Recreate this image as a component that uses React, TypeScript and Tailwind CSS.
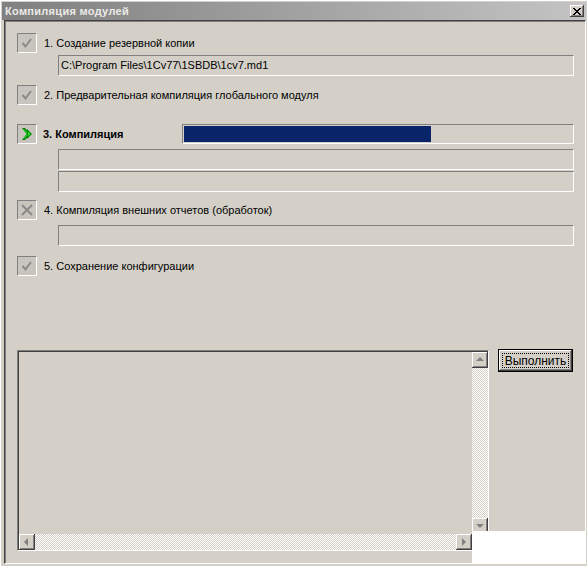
import React from "react";

const raised =
  "bg-[#d4d0c8] shadow-[inset_-1px_-1px_#404040,inset_1px_1px_#ffffff,inset_-2px_-2px_#808080]";
const checker =
  "bg-[repeating-conic-gradient(#ffffff_0%_25%,#d4d0c8_0%_50%)] bg-[length:2px_2px]";

function Field({ text, className = "" }: { text?: string; className?: string }) {
  return (
    <div
      className={`ml-[41px] w-[516px] h-[21px] border-t border-l border-[#808080] border-r-white border-b-white border-r border-b flex items-center pl-[2px] text-black ${className}`}
    >
      {text}
    </div>
  );
}

function Box({ children }: { children: React.ReactNode }) {
  return (
    <div className="w-[20px] h-[20px] shrink-0 bg-[#c8c5be] border-t border-l border-[#808080] border-r border-b border-r-white border-b-white flex items-center justify-center">
      {children}
    </div>
  );
}

function Check() {
  return (
    <Box>
      <svg width="18" height="18" viewBox="0 0 18 18">
        <path d="M4.5 9 L7.5 12.5 L13 5" fill="none" stroke="#8a8a8a" strokeWidth="2" />
      </svg>
    </Box>
  );
}

function Cross() {
  return (
    <Box>
      <svg width="18" height="18" viewBox="0 0 18 18">
        <path d="M4 4 L14 14 M14 4 L4 14" fill="none" stroke="#8a8a8a" strokeWidth="2" />
      </svg>
    </Box>
  );
}

function Play() {
  return (
    <Box>
      <svg width="18" height="18" viewBox="0 0 18 18">
        <polygon points="4,3 7,3 12,9 7,15 4,15 9,9" fill="#007a00" />
        <polygon points="5,4.5 7,4.5 10.5,9 7,13.5 5,13.5 8.5,9" fill="#22c022" />
        <polygon points="9,4 14,9 9,14" fill="#008a00" />
        <polygon points="10,6.5 12.5,9 10,11.5" fill="#3ad63a" />
      </svg>
    </Box>
  );
}

function Arrow({ dir }: { dir: "up" | "down" | "left" | "right" }) {
  const pts = {
    up: "4,9 8,5 12,9",
    down: "4,6 8,10 12,6",
    left: "9,4 5,8 9,12",
    right: "6,4 10,8 6,12",
  }[dir];
  return (
    <div className={`w-[16px] h-[16px] shrink-0 ${raised} flex items-center justify-center`}>
      <svg width="16" height="16" viewBox="0 0 16 16">
        <polygon points={pts} fill="#808080" />
      </svg>
    </div>
  );
}

export default function App() {
  return (
    <div
      className="relative w-[587px] h-[566px] bg-[#d4d0c8] text-[11px] leading-none text-black overflow-hidden border-l border-t border-white"
      style={{ fontFamily: '"Liberation Sans", Arial, sans-serif' }}
    >
      {/* title bar */}
      <div className="mt-[1px] ml-[1px] mr-[1px] h-[18px] bg-gradient-to-r from-[#808080] to-[#c4c4c4] flex items-center justify-between pl-[3px] pr-[2px]">
        <span className="font-bold text-[#ecebe7] text-[11px] tracking-[0.3px]">Компиляция модулей</span>
        <div className={`w-[14px] h-[12px] ${raised} flex items-center justify-center`}>
          <svg width="8" height="7" viewBox="0 0 8 7">
            <path d="M0 0h2v1h-2zM6 0h2v1h-2zM1 1h2v1h-2zM5 1h2v1h-2zM2 2h4v1h-4zM3 3h2v1h-2zM2 4h4v1h-4zM1 5h2v1h-2zM5 5h2v1h-2zM0 6h2v1h-2zM6 6h2v1h-2z" fill="#000" />
          </svg>
        </div>
      </div>

      {/* client frame */}
      <div className="ml-[3px] w-[582px] h-[544px] border-t border-l border-[#404040] border-r border-b border-r-white border-b-white shadow-[inset_1px_1px_#808080] pl-[12px] pt-[12px]">
        <div className="flex items-center h-[20px]">
          <Check />
          <span className="ml-[7px]">1. Создание резервной копии</span>
        </div>
        <Field className="mt-[2px]" text="C:\Program Files\1Cv77\1SBDB\1cv7.md1" />

        <div className="flex items-center h-[20px] mt-[9px]">
          <Check />
          <span className="ml-[7px]">2. Предварительная компиляция глобального модуля</span>
        </div>

        <div className="flex items-center h-[20px] mt-[19px] w-[557px]">
          <Play />
          <span className="ml-[6px] font-bold">3. Компиляция</span>
          <div className="ml-auto w-[392px] h-[20px] border-t border-l border-[#808080] border-r border-b border-r-white border-b-white p-[1px]">
            <div className="h-full w-[247px] bg-[#0a246a]" />
          </div>
        </div>
        <Field className="mt-[5px]" />
        <Field className="mt-[1px]" />

        <div className="flex items-center h-[20px] mt-[8px]">
          <Cross />
          <span className="ml-[7px]">4. Компиляция внешних отчетов (обработок)</span>
        </div>
        <Field className="mt-[5px]" />

        <div className="flex items-center h-[20px] mt-[10px]">
          <Check />
          <span className="ml-[7px]">5. Сохранение конфигурации</span>
        </div>

        {/* log + button */}
        <div className="flex items-start mt-[74px]">
          <div className="w-[472px] h-[201px] border-t border-l border-[#808080] border-r border-b border-r-white border-b-white shadow-[inset_1px_1px_#404040] pt-[1px] pl-[1px] flex flex-col">
            <div className="flex flex-1">
              <div className="flex-1" />
              <div className="w-[16px] flex flex-col">
                <Arrow dir="up" />
                <div className={`flex-1 ${checker}`} />
                <Arrow dir="down" />
              </div>
            </div>
            <div className="flex h-[16px] mr-[16px]">
              <Arrow dir="left" />
              <div className={`flex-1 ${checker}`} />
              <Arrow dir="right" />
            </div>
          </div>
          <div className="ml-[9px] -mt-[1px] w-[75px] h-[23px] border border-black">
            <div className={`w-full h-full ${raised} p-[3px]`}>
              <div className="w-full h-full border border-dotted border-black flex items-center justify-center text-[12px]">
                Выполнить
              </div>
            </div>
          </div>
        </div>
      </div>

      {/* white patch over bottom-right corner */}
      <div className="absolute left-[471px] top-[530px] w-[114px] h-[33px] bg-white" />
    </div>
  );
}
